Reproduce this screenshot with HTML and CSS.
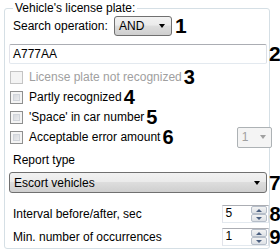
FILE: index.html
```html
<!DOCTYPE html>
<html>
<head>
<meta charset="utf-8">
<link rel="stylesheet" href="styles.css">
</head>
<body>
<fieldset class="group">
  <legend class="legend">Vehicle's license plate:</legend>
  <div class="row op-row">
    <span class="label">Search operation:</span>
    <div class="combo combo-and"><span class="combo-text">AND</span><span class="arrow"></span></div>
    <span class="num">1</span>
  </div>
  <div class="row">
    <div class="textbox">A777AA</div>
    <span class="num">2</span>
  </div>
  <div class="check-row disabled">
    <span class="cb"></span><span class="cb-label">License plate not recognized</span><span class="num num-s">3</span>
  </div>
  <div class="check-row">
    <span class="cb"></span><span class="cb-label">Partly recognized</span><span class="num num-s">4</span>
  </div>
  <div class="check-row">
    <span class="cb"></span><span class="cb-label">'Space' in car number</span><span class="num num-s">5</span>
  </div>
  <div class="check-row">
    <span class="cb"></span><span class="cb-label">Acceptable error amount</span><span class="num num-s">6</span>
    <div class="dis-combo"><span class="dis-text">1</span><span class="arrow arrow-dis"></span></div>
  </div>
  <div class="label report">Report type</div>
  <div class="row">
    <div class="combo combo-wide"><span class="combo-text">Escort vehicles</span><span class="arrow"></span></div>
    <span class="num">7</span>
  </div>
  <div class="row spin-row spin-first">
    <span class="label grow">Interval before/after, sec</span>
    <div class="spin"><span class="spin-val">5</span><span class="spin-btns"><span class="sb"><span class="up"></span></span><span class="sb"><span class="down"></span></span></span></div>
    <span class="num">8</span>
  </div>
  <div class="row spin-row">
    <span class="label grow">Min. number of occurrences</span>
    <div class="spin"><span class="spin-val">1</span><span class="spin-btns"><span class="sb"><span class="up"></span></span><span class="sb"><span class="down"></span></span></span></div>
    <span class="num">9</span>
  </div>
</fieldset>
</body>
</html>
```
FILE: styles.css
```css
html, body {
  margin: 0;
  padding: 0;
  background: #ffffff;
  width: 280px;
  height: 252px;
  overflow: hidden;
}
body {
  font-family: "Liberation Sans", Arial, sans-serif;
  font-size: 12px;
  color: #000;
}
.group {
  margin: 1px 0 0 4px;
  width: 265px;
  height: 248px;
  box-sizing: border-box;
  border: 1px solid #d5dfe5;
  border-radius: 3px;
  padding: 1px 0 0 4px;
}
.legend {
  padding: 0 2px;
  margin-left: 4px;
  line-height: 14px;
  color: #000;
}
.row {
  display: flex;
  align-items: center;
  margin-right: -12px;
}
.op-row {
  height: 20px;
  margin-top: 0;
}
.label {
  white-space: nowrap;
}
.op-row .label {
  padding-left: 4px;
  width: 101px;
}
.combo {
  box-sizing: border-box;
  height: 20px;
  border: 1px solid #707070;
  border-radius: 3px;
  background: linear-gradient(#f2f2f2 0%, #ebebeb 45%, #dddddd 50%, #cfcfcf 100%);
  display: flex;
  align-items: center;
  position: relative;
}
.combo-and {
  width: 58px;
}
.combo-text {
  padding-left: 4px;
  flex: 1;
}
.arrow {
  width: 0;
  height: 0;
  border-left: 3.5px solid transparent;
  border-right: 3.5px solid transparent;
  border-top: 4px solid #000;
  margin-right: 6px;
}
.num {
  font-weight: bold;
  font-size: 21px;
  line-height: 20px;
  margin-left: 3px;
}
.num-s {
  font-size: 20px;
  margin-left: 2px;
}
.textbox {
  margin-top: 8px;
  margin-left: 0;
  box-sizing: border-box;
  width: 258px;
  height: 20px;
  border: 1px solid #abadb3;
  border-left-color: #e2e3ea;
  border-right-color: #dbdfe6;
  border-bottom-color: #e3e9ef;
  border-radius: 2px;
  padding: 2px 3px;
  line-height: 14px;
}
.textbox + .num {
  margin-top: 8px;
  margin-left: 2px;
}
.check-row {
  display: flex;
  align-items: center;
  height: 20px;
  margin-left: 1px;
}
.disabled {
  margin-top: 3px;
}
.cb {
  box-sizing: border-box;
  width: 13px;
  height: 13px;
  border: 1px solid #8e8f8f;
  background: linear-gradient(135deg, #cbcfd5, #f6f6f6);
  box-shadow: inset 0 0 0 2px #f4f4f4, inset 0 0 0 3px #d0d4da;
  flex: none;
}
.disabled .cb {
  border-color: #c4c4c4;
  background: #f4f4f4;
  box-shadow: none;
}
.cb-label {
  margin-left: 6px;
  white-space: nowrap;
}
.disabled .cb-label {
  color: #a0a0a0;
}
.dis-combo {
  margin-left: auto;
  margin-right: -3px;
  box-sizing: border-box;
  width: 35px;
  height: 21px;
  border: 1px solid #adb2b5;
  border-radius: 2px;
  background: #f4f4f4;
  display: flex;
  align-items: center;
}
.dis-text {
  color: #a0a0a0;
  padding-left: 4px;
  flex: 1;
}
.arrow-dis {
  border-top-color: #a0a0a0;
  margin-right: 5px;
}
.report {
  margin-top: 5px;
  padding-left: 4px;
  line-height: 16px;
}
.combo-wide {
  width: 258px;
  height: 21px;
  margin-top: 4px;
}
.combo-wide + .num {
  margin-top: 4px;
  margin-left: 2px;
}
.spin-row {
  height: 18px;
  margin-top: 5px;
}
.spin-first {
  margin-top: 12px;
}
.spin-row .grow {
  flex: 1;
  padding-left: 4px;
}
.spin {
  box-sizing: border-box;
  width: 47px;
  height: 18px;
  border: 1px solid #abadb3;
  border-left-color: #e2e3ea;
  border-bottom-color: #e3e9ef;
  border-right-color: #dbdfe6;
  display: flex;
}
.spin-val {
  flex: 1;
  padding-left: 3px;
  line-height: 15px;
}
.spin-btns {
  width: 16px;
  display: flex;
  flex-direction: column;
  padding: 0 1px 0 0;
}
.sb {
  flex: 1;
  box-sizing: border-box;
  border: 1px solid #b6bec9;
  border-radius: 2px;
  background: linear-gradient(#f3f3f3, #dde1e6);
  display: flex;
  align-items: center;
  justify-content: center;
}
.up {
  width: 0; height: 0;
  border-left: 3px solid transparent;
  border-right: 3px solid transparent;
  border-bottom: 3px solid #4a5f80;
}
.down {
  width: 0; height: 0;
  border-left: 3px solid transparent;
  border-right: 3px solid transparent;
  border-top: 3px solid #4a5f80;
}
.spin-row .num {
  font-size: 20px;
  margin-left: 1px;
}
```
